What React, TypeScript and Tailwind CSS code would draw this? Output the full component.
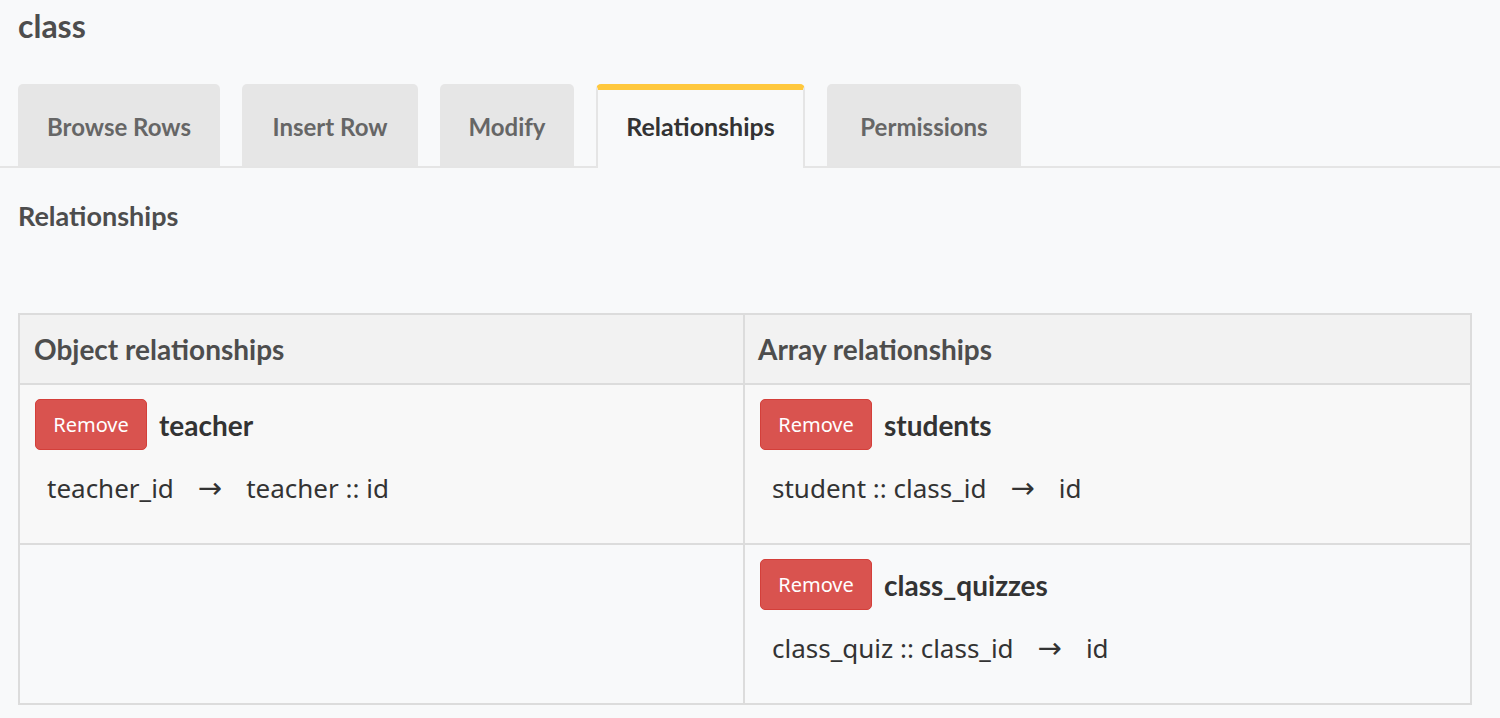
import React from 'react'

const heading = "font-['Lato','Liberation_Sans',sans-serif] font-bold"
const body = "font-['Noto_Sans','Open_Sans',sans-serif]"

const tabs = [
    { label: 'Browse Rows', w: 'w-[202px]' },
    { label: 'Insert Row', w: 'w-[176px]' },
    { label: 'Modify', w: 'w-[134px]' },
    { label: 'Relationships', w: 'w-[209px]', active: true },
    { label: 'Permissions', w: 'w-[194px]' },
]

function RemoveButton() {
    return (
        <button className={`${body} h-[51px] w-[112px] rounded-[5px] border border-[#d43f3a] bg-[#d9534f] text-[20px] text-white`}>
            Remove
        </button>
    )
}

function Relation({ name, from, to }: { name: string; from: string; to: string }) {
    return (
        <div className="px-[15px] pt-[14px]">
            <div className="flex items-center gap-[12px]">
                <RemoveButton />
                <span className={`${heading} text-[28px] text-[#333]`}>{name}</span>
            </div>
            <div className={`${body} mt-[20px] flex items-center pl-[12px] text-[26px] leading-[36px] text-[#333]`}>
                <span>{from}</span>
                <span className="mx-[24px] font-['DejaVu_Sans',sans-serif] text-[29px] leading-[36px]">→</span>
                <span>{to}</span>
            </div>
        </div>
    )
}

export default function App() {
    return (
        <div className="min-h-screen bg-[#f8f9fa] pt-[6px]">
            <h1 className={`${heading} pl-[18px] text-[32px] leading-[40px] text-[#4d4d4d]`}>class</h1>

            {/* Tabs */}
            <div className="mt-[38px] flex items-end gap-[22px] border-b-2 border-[#e5e5e5] pl-[18px]">
                {tabs.map((t) =>
                    t.active ? (
                        <div
                            key={t.label}
                            className={`${t.w} -mb-[2px] flex h-[84px] items-center justify-center rounded-t-[5px] border-x-2 border-t-[6px] border-x-[#e5e5e5] border-t-[#ffc83d] bg-[#f8f9fa] pb-[4px] ${heading} text-[25px] text-[#333]`}
                        >
                            {t.label}
                        </div>
                    ) : (
                        <div
                            key={t.label}
                            className={`${t.w} flex h-[82px] items-center justify-center rounded-t-[5px] bg-[#e6e6e6] pt-[4px] ${heading} text-[24px] text-[#666]`}
                        >
                            {t.label}
                        </div>
                    )
                )}
            </div>

            <h2 className={`${heading} mt-[31px] pl-[18px] text-[27px] leading-[34px] text-[#4d4d4d]`}>Relationships</h2>

            {/* Table */}
            <div className="mx-[18px] mt-[80px] w-[1454px] border-2 border-[#dcdcdc]">
                <div className="grid grid-cols-[725px_1fr] border-b-2 border-[#dcdcdc] bg-[#f2f2f2]">
                    <div className={`${heading} flex h-[68px] items-center border-r-2 border-[#dcdcdc] px-[14px] text-[28px] text-[#4d4d4d]`}>
                        Object relationships
                    </div>
                    <div className={`${heading} flex h-[68px] items-center px-[13px] text-[28px] text-[#4d4d4d]`}>
                        Array relationships
                    </div>
                </div>
                <div className="grid grid-cols-[725px_1fr] border-b-2 border-[#dcdcdc] bg-[#f8f8f8]">
                    <div className="h-[158px] border-r-2 border-[#dcdcdc]">
                        <Relation name="teacher" from="teacher_id" to="teacher :: id" />
                    </div>
                    <div className="h-[158px]">
                        <Relation name="students" from="student :: class_id" to="id" />
                    </div>
                </div>
                <div className="grid grid-cols-[725px_1fr]">
                    <div className="h-[158px] border-r-2 border-[#dcdcdc]" />
                    <div className="h-[158px]">
                        <Relation name="class_quizzes" from="class_quiz :: class_id" to="id" />
                    </div>
                </div>
            </div>
        </div>
    )
}
